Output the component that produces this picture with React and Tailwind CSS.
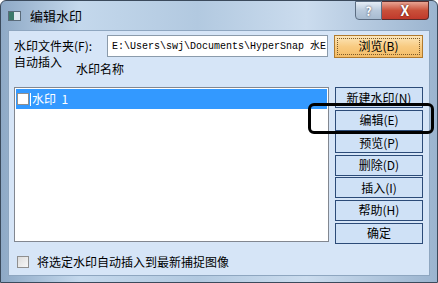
const cjk = { fontFamily: '"Noto Sans CJK SC", "Noto Sans", sans-serif' }

function SideButton({ children, className = '' }) {
  return (
    <div
      className={`h-[21px] w-[88px] flex items-center justify-center border border-[#2c4b78] bg-[#cfe1f6] text-[12px] leading-none text-black ${className}`}
    >
      {children}
    </div>
  )
}

export default function App() {
  const buttons = ['新建水印(N)', '编辑(E)', '预览(P)', '删除(D)', '插入(I)', '帮助(H)', '确定']

  return (
    <div
      className="relative w-[438px] h-[283px] overflow-hidden rounded-t-[6px] border border-[#3b4a5c] bg-[linear-gradient(90deg,#8ea9c6_0%,#c4d8ec_18%,#b2c9e0_45%,#cbdcee_70%,#9bb4cf_100%)]"
      style={cjk}
    >
      {/* title bar */}
      <div className="relative h-[29px] flex items-center pl-[7px]">
        <div className="w-[13px] h-[10px] flex border border-[#5a6b7a] bg-white">
          <div className="w-[5px] bg-[#3d7a6a]" />
          <div className="flex-1 bg-[#dfe8ef]" />
        </div>
        <span className="ml-[9px] text-[13px] text-black leading-none">编辑水印</span>
        <div className="absolute top-0 right-[8px] flex">
          <div className="w-[27px] h-[19px] flex items-center justify-center rounded-bl-[4px] border border-[#5b6d82] bg-[linear-gradient(180deg,#e6eef7,#b9cadc_50%,#a7bbd0)] text-[12px] font-bold text-white [text-shadow:0_0_2px_#334]">
            ?
          </div>
          <div className="w-[47px] h-[19px] flex items-center justify-center rounded-br-[4px] border border-l-0 border-[#5a2b2b] bg-[linear-gradient(180deg,#e8a493,#c9503a_50%,#c0392b)] text-[14px] font-bold text-white [text-shadow:0_0_2px_#300]">
            X
          </div>
        </div>
      </div>

      {/* client area */}
      <div className="ml-[7px] w-[422px] h-[246px] border border-[#8ea6c0] bg-[#d6e5f7] pl-[5px] pt-[3px]">
        <div className="flex items-center h-[24px]">
          <span className="w-[93px] text-[12px] text-black">水印文件夹(F):</span>
          <div
            className="w-[221px] h-[22px] border border-[#8b9bab] bg-white flex items-center px-[4px] text-[10px] text-black whitespace-nowrap overflow-hidden"
            style={{ fontFamily: '"Liberation Mono", "Noto Sans CJK SC", monospace' }}
          >
            E:\Users\swj\Documents\HyperSnap 水E
          </div>
          <div className="ml-[6px] w-[89px] h-[23px] border border-[#b07a2e] bg-[linear-gradient(180deg,#fde7bb,#f8cb82_50%,#f4bc66)] p-[2px]">
            <div className="w-full h-full border border-dotted border-[#7a5a2a] flex items-center justify-center text-[12px] text-black">
              浏览(B)
            </div>
          </div>
        </div>

        <div className="flex h-[29px] text-[12px] text-black">
          <span className="mt-[-5px]">自动插入</span>
          <span className="ml-[14px] mt-[2px]">水印名称</span>
        </div>

        <div className="flex">
          <div className="w-[315px] h-[155px] border border-[#828790] bg-white p-[1px]">
            <div className="h-[20px] bg-[#3399ff] flex items-center text-[12px] text-white">
              <div className="w-[12px] h-[12px] border border-[#8f8f8f] bg-white ml-[1px]" />
              <div className="w-[1px] h-[13px] bg-white ml-[1px]" />
              <span className="ml-[1px]">水印&nbsp;&nbsp;1</span>
            </div>
          </div>
          <div className="ml-[6px] flex flex-col gap-[1.6px]">
            {buttons.map((b) => (
              <SideButton key={b}>{b}</SideButton>
            ))}
          </div>
        </div>

        <div className="flex items-center mt-[9px] ml-[3px]">
          <div className="w-[12px] h-[12px] border border-[#8f8f8f] bg-[linear-gradient(135deg,#dcdcdc,#f7f7f7)]" />
          <span className="ml-[8px] text-[12px] text-black">将选定水印自动插入到最新捕捉图像</span>
        </div>
      </div>

      {/* annotation highlight */}
      <div className="absolute left-[307px] top-[102px] w-[126px] h-[31px] rounded-[6px] border-[3px] border-black" />
    </div>
  )
}
